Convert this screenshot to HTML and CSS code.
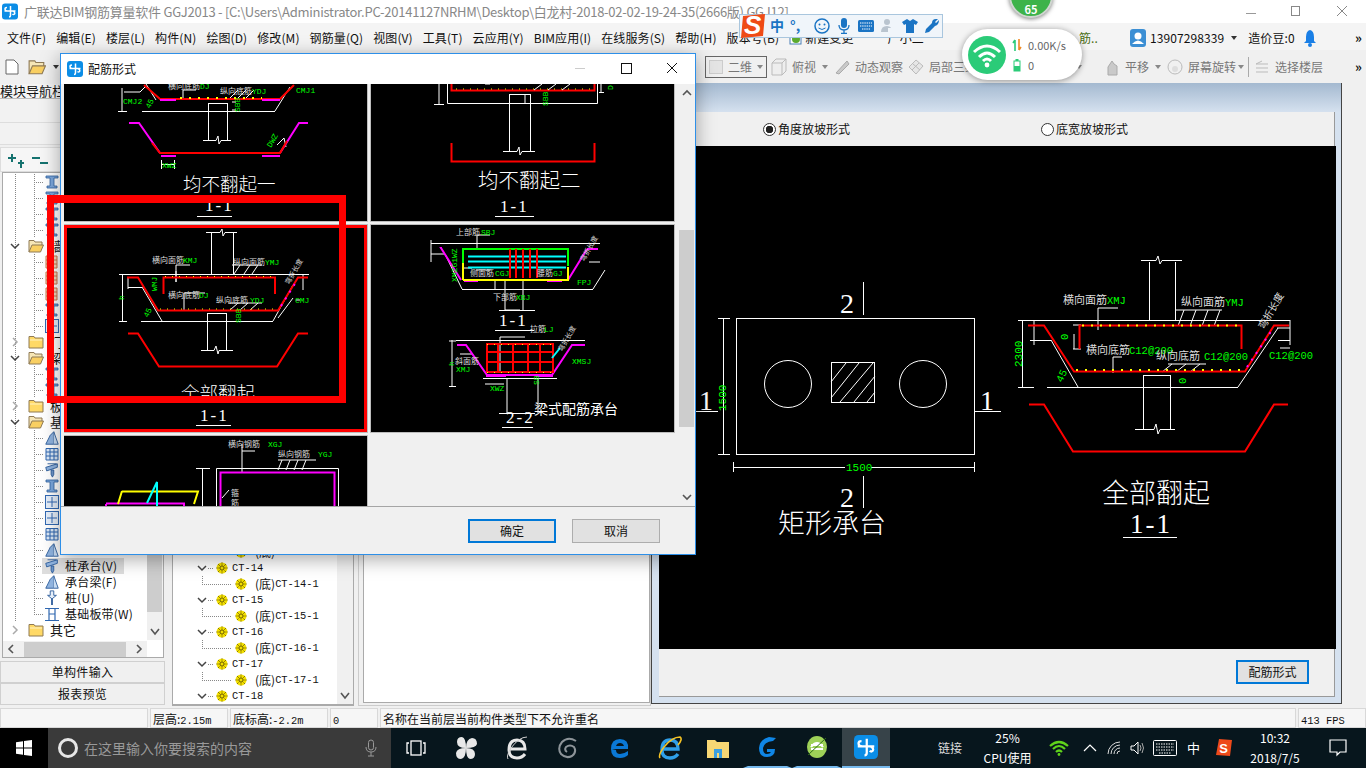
FILE: index.html
```html
<!DOCTYPE html>
<html lang="zh-CN">
<head>
<meta charset="utf-8">
<title>配筋形式</title>
<link rel="stylesheet" href="styles.css">
</head>
<body>
<svg class="defs" aria-hidden="true">
  <symbol id="gld" viewBox="0 0 16 16"><rect width="16" height="16" rx="3" fill="#0b8de6"/><path d="M8.5 2.5 V12 Q8.5 13.5 7 13.5 M2.5 7.5 H13.5 M5.5 7.5 Q3 7.5 3 5.5 Q3 4 5 4 M11 7.5 Q13.5 9 12.5 10.5 Q11.5 11.5 10.5 10.5" fill="none" stroke="#fff" stroke-width="1.5"/></symbol>
  <symbol id="folderc" viewBox="0 0 16 14"><path d="M1 3 V1.5 H6 L7 3 H15 V13 H1 Z" fill="#ffd966" stroke="#8f7a55"/><path d="M2 5 H14" stroke="#fff3c4"/></symbol>
  <symbol id="foldero" viewBox="0 0 16 14"><path d="M1 13 V1.5 H6 L7 3 H14 V6" fill="#f6e6b6" stroke="#8f7a55"/><path d="M1 13 L4 6 H15.5 L12.5 13 Z" fill="#f9cf62" stroke="#8f7a55"/></symbol>
  <symbol id="chevd" viewBox="0 0 12 8"><path d="M2 2 L6 6 L10 2" fill="none" stroke="#444" stroke-width="1.5"/></symbol>
  <symbol id="chevr" viewBox="0 0 8 12"><path d="M2 2 L6 6 L2 10" fill="none" stroke="#aaa" stroke-width="1.5"/></symbol>
  <symbol id="col" viewBox="0 0 16 16"><path d="M2 2 H14 V4 H10 V12 H13 V14 H3 V12 H6 V4 H2 Z" fill="#7ba7dc" stroke="#2f5f9f" stroke-width=".8"/></symbol>
  <symbol id="grid" viewBox="0 0 16 16"><path d="M2 2.5 H14 V14 H2 Z M2 6 H14 M2 10 H14 M6 2.5 V14 M10 2.5 V14" fill="#dce9f8" stroke="#2f67b0" stroke-width="1"/></symbol>
  <symbol id="orange" viewBox="0 0 16 16"><path d="M2 2 H13 V14 H2 Z M2 6 H13 M2 10 H13 M8 2 V14" fill="#f4d5bb" stroke="#c9744a"/></symbol>
  <symbol id="boxcross" viewBox="0 0 16 16"><rect x="1.5" y="1.5" width="13" height="13" fill="#e6effa" stroke="#3269b3"/><path d="M8 3 V13 M3 8 H13" stroke="#3269b3"/></symbol>
  <symbol id="cap" viewBox="0 0 16 18"><path d="M1 6 L14 2 V6 L2 10 Z" fill="#8fb3df" stroke="#2a5a9a"/><path d="M7 9 H10 V14 L8.5 17 L7 14 Z" fill="#6f96c9" stroke="#2a5a9a"/><path d="M3 2 H13" stroke="#2a5a9a"/></symbol>
  <symbol id="beam" viewBox="0 0 16 18"><path d="M1 16 L6 6 L10 2 V16 Z" fill="#8fb3df" stroke="#2a5a9a"/><path d="M10 2 L15 16 H10" fill="#c7dcf3" stroke="#2a5a9a"/></symbol>
  <symbol id="pile" viewBox="0 0 16 18"><path d="M6 1 H10 V6 H13 L8 10 L3 6 H6 Z" fill="#e6effa" stroke="#2a5a9a"/><path d="M8 10 V17" stroke="#2a5a9a" stroke-width="2"/></symbol>
  <symbol id="band" viewBox="0 0 16 16"><path d="M1 2.5 H15 M1 14.5 H15 M5 2.5 V14.5 M11 2.5 V14.5 M5 8 H11" fill="none" stroke="#2f67b0" stroke-width="1.2"/></symbol>
  <symbol id="gear" viewBox="0 0 12 12"><circle cx="6" cy="6" r="5.5" fill="#f3e000"/><path d="M.5 6 H11.5 M6 .5 V11.5 M2 2 L10 10 M10 2 L2 10" stroke="#5c4c00" stroke-width="1" stroke-dasharray="1 1"/><circle cx="6" cy="6" r="2" fill="#f3e000" stroke="#5c4c00" stroke-width=".8"/></symbol>
  <symbol id="gicon" viewBox="0 0 24 24"><path d="M14 2 Q5 4 4 13 Q4 22 12 22 Q20 22 20 14 H12 V17 H16 Q15 19 12 19 Q8 19 8 13 Q9 7 18 6 L21 3 Z" fill="#0f86e6"/></symbol>
</svg>

<div class="app">
  <header class="title">
    <svg class="title-icon"><use href="#gld"/></svg>
    <span class="title-text">广联达BIM钢筋算量软件 GGJ2013 - [C:\Users\Administrator.PC-20141127NRHM\Desktop\白龙村-2018-02-02-19-24-35(2666版) GGJ12]</span>
    <span class="wc wc-min"></span>
    <span class="wc wc-max"></span>
    <svg class="wc-close" viewBox="0 0 12 12"><path d="M1 1 L11 11 M11 1 L1 11" stroke="#888" stroke-width="1"/></svg>
  </header>

  <nav class="menu">
    <span>文件(F)</span><span>编辑(E)</span><span>楼层(L)</span><span>构件(N)</span><span>绘图(D)</span><span>修改(M)</span><span>钢筋量(Q)</span><span>视图(V)</span><span>工具(T)</span><span>云应用(Y)</span><span>BIM应用(I)</span><span>在线服务(S)</span><span>帮助(H)</span><span>版本号(B)</span>
    <span class="menu-x">
      <svg class="sm-ico" viewBox="0 0 14 14"><rect x="1" y="1" width="11" height="12" fill="#fff" stroke="#4a7fb5"/><circle cx="7" cy="8" r="4" fill="#5cab2e"/></svg>新建变更</span>
    <span class="menu-y">广小二</span>
    <span class="menu-z">筋..</span>
    <span class="acct">
      <svg class="acct-ico" viewBox="0 0 16 18"><rect width="16" height="18" rx="3" fill="#3c8fd4"/><circle cx="8" cy="7" r="3.5" fill="#fff"/><path d="M2 15 Q8 8 14 15 Z" fill="#fff"/></svg>
      <span>13907298339</span><i class="caret"></i><span class="beans">造价豆:0</span>
      <svg class="bell" viewBox="0 0 14 18"><path d="M7 1 Q11 2 11 8 V12 L13 14 H1 L3 12 V8 Q3 2 7 1 Z" fill="#1a7fe6"/><circle cx="7" cy="16" r="2" fill="#1a7fe6"/></svg>
    </span>
    <span class="more">»</span>
  </nav>

  <div class="tools">
    <div class="tools-l">
      <svg class="t-ico" viewBox="0 0 14 16"><path d="M1 1 H9 L13 5 V15 H1 Z" fill="#fff" stroke="#666"/></svg>
      <svg class="t-ico2" viewBox="0 0 18 16"><use href="#foldero"/></svg>
      <i class="caret"></i>
    </div>
    <div class="tools-r">
      <span class="combo"><i class="combo-box"></i>二维<i class="caret caret-g"></i></span>
      <svg class="g-ico" viewBox="0 0 16 18"><path d="M1 5 L5 1 H15 V13 L11 17 H1 Z M1 5 H11 V17 M11 5 L15 1" fill="#eee" stroke="#bbb"/></svg>
      <span class="g-t g-a">俯视</span><i class="caret caret-g"></i>
      <svg class="g-ico" viewBox="0 0 16 16"><path d="M2 14 L13 2 L15 5 L5 15 Z" fill="#c9c9c9" stroke="#aaa"/></svg>
      <span class="g-t">动态观察</span>
      <svg class="g-ico g-b" viewBox="0 0 16 16"><path d="M8 1 L15 7 L8 15 L1 8 Z M5 5 L12 11 M11 4 L4 11" fill="#e6e6e6" stroke="#bbb"/></svg>
      <span class="g-t">局部三维</span>
      <span class="g-t g-c">放大</span><i class="caret caret-g"></i>
      <svg class="g-ico g-d" viewBox="0 0 16 18"><path d="M4 17 V9 L8 3 L10 6 L13 8 V17 Z" fill="#c9c9c9" stroke="#aaa"/></svg>
      <span class="g-t">平移</span><i class="caret caret-g"></i>
      <svg class="g-ico g-e" viewBox="0 0 16 18"><circle cx="8" cy="9" r="7" fill="none" stroke="#bbb"/><circle cx="8" cy="11" r="3" fill="#ddd"/></svg>
      <span class="g-t">屏幕旋转</span><i class="caret caret-t"></i><i class="t-sep"></i>
      <svg class="g-ico" viewBox="0 0 16 16"><path d="M2 5 H14 M2 9 H14 M2 13 H14 M8 2 L2 5" stroke="#bbb" fill="none"/></svg>
      <span class="g-t">选择楼层</span>
      <span class="more more-t">»</span>
    </div>
  </div>

  <main class="main">
    <section class="nav">
      <div class="nav-head">模块导航栏</div>
      <div class="nav-tab"></div>
      <div class="nav-tab nav-tab2"></div>
      <div class="nav-tool">
        <svg class="pm" viewBox="0 0 18 16"><path d="M5 1 V9 M1 5 H9 M11 10 H17 M14 7 V15" stroke="#15726f" stroke-width="2" fill="none"/></svg>
        <svg class="pm" viewBox="0 0 18 16"><path d="M1 5 H9 M9 10 H17" stroke="#15726f" stroke-width="2" fill="none"/></svg>
      </div>
      <div class="nav-tree">
        <div class="nav-scroll-area">
          <div class="row l2"><svg class="ic"><use href="#col"/></svg></div>
          <div class="row l2"><svg class="ic"><use href="#col"/></svg></div>
          <div class="row l2"><svg class="ic"><use href="#col"/></svg></div>
          <div class="row l2"><svg class="ic"><use href="#col"/></svg></div>
          <div class="row l0"><svg class="ch"><use href="#chevd"/></svg><svg class="fo"><use href="#foldero"/></svg><span>墙</span></div>
          <div class="row l2"><svg class="ic"><use href="#orange"/></svg></div>
          <div class="row l2"><svg class="ic"><use href="#orange"/></svg></div>
          <div class="row l2"><svg class="ic"><use href="#orange"/></svg></div>
          <div class="row l2"><svg class="ic"><use href="#col"/></svg></div>
          <div class="row l2"><svg class="ic"><use href="#boxcross"/></svg></div>
          <div class="row l0"><svg class="chr"><use href="#chevr"/></svg><svg class="fo"><use href="#folderc"/></svg><span>门</span></div>
          <div class="row l0"><svg class="ch"><use href="#chevd"/></svg><svg class="fo"><use href="#foldero"/></svg><span>梁</span></div>
          <div class="row l2"><svg class="ic"><use href="#col"/></svg></div>
          <div class="row l2"><svg class="ic"><use href="#col"/></svg></div>
          <div class="row l0"><svg class="chr"><use href="#chevr"/></svg><svg class="fo"><use href="#folderc"/></svg><span>板</span></div>
          <div class="row l0"><svg class="ch"><use href="#chevd"/></svg><svg class="fo"><use href="#foldero"/></svg><span>基</span></div>
          <div class="row l2"><svg class="ic"><use href="#beam"/></svg></div>
          <div class="row l2"><svg class="ic"><use href="#grid"/></svg></div>
          <div class="row l2"><svg class="ic"><use href="#cap"/></svg></div>
          <div class="row l2"><svg class="ic"><use href="#col"/></svg></div>
          <div class="row l2"><svg class="ic"><use href="#boxcross"/></svg></div>
          <div class="row l2"><svg class="ic"><use href="#boxcross"/></svg></div>
          <div class="row l2"><svg class="ic"><use href="#grid"/></svg></div>
          <div class="row l2"><svg class="ic"><use href="#beam"/></svg></div>
          <div class="row l2"><span class="hl"><svg class="ic"><use href="#cap"/></svg><span class="n">桩承台(V)</span></span></div>
          <div class="row l2"><svg class="ic"><use href="#beam"/></svg><span class="n">承台梁(F)</span></div>
          <div class="row l2"><svg class="ic"><use href="#pile"/></svg><span class="n">桩(U)</span></div>
          <div class="row l2 l2-end"><svg class="ic"><use href="#band"/></svg><span class="n">基础板带(W)</span></div>
          <div class="row l0 l0-end"><svg class="chr"><use href="#chevr"/></svg><svg class="fo"><use href="#folderc"/></svg><span>其它</span></div>
        </div>
        <div class="vbar"><span class="vbar-thumb"></span><svg class="vbar-a" viewBox="0 0 10 8"><path d="M1 1 L5 6 L9 1" fill="none" stroke="#555" stroke-width="1.6"/></svg></div>
        <div class="hbar"><svg class="hbar-a" viewBox="0 0 8 10"><path d="M6 1 L2 5 L6 9" fill="none" stroke="#555" stroke-width="1.6"/></svg><span class="hbar-thumb"></span><svg class="hbar-a" viewBox="0 0 8 10"><path d="M2 1 L6 5 L2 9" fill="none" stroke="#555" stroke-width="1.6"/></svg></div>
      </div>
      <div class="nav-btn nav-btn1">单构件输入</div>
      <div class="nav-btn">报表预览</div>
    </section>

    <section class="tree2">
      <div class="tree2-list">
        <div class="p"><svg class="ch2"><use href="#chevd"/></svg><svg class="gr"><use href="#gear"/></svg><span class="m">CT-13</span></div>
        <div class="c"><svg class="gr"><use href="#gear"/></svg>(底)<span class="m">CT-13-1</span></div>
        <div class="p"><svg class="ch2"><use href="#chevd"/></svg><svg class="gr"><use href="#gear"/></svg><span class="m">CT-14</span></div>
        <div class="c"><svg class="gr"><use href="#gear"/></svg>(底)<span class="m">CT-14-1</span></div>
        <div class="p"><svg class="ch2"><use href="#chevd"/></svg><svg class="gr"><use href="#gear"/></svg><span class="m">CT-15</span></div>
        <div class="c"><svg class="gr"><use href="#gear"/></svg>(底)<span class="m">CT-15-1</span></div>
        <div class="p"><svg class="ch2"><use href="#chevd"/></svg><svg class="gr"><use href="#gear"/></svg><span class="m">CT-16</span></div>
        <div class="c"><svg class="gr"><use href="#gear"/></svg>(底)<span class="m">CT-16-1</span></div>
        <div class="p"><svg class="ch2"><use href="#chevd"/></svg><svg class="gr"><use href="#gear"/></svg><span class="m">CT-17</span></div>
        <div class="c"><svg class="gr"><use href="#gear"/></svg>(底)<span class="m">CT-17-1</span></div>
        <div class="p"><svg class="ch2"><use href="#chevd"/></svg><svg class="gr"><use href="#gear"/></svg><span class="m">CT-18</span></div>
      </div>
      <div class="tree2-bar"><svg class="vbar-a" viewBox="0 0 10 8"><path d="M1 1 L5 6 L9 1" fill="none" stroke="#555" stroke-width="1.6"/></svg></div>
    </section>

    <section class="blank"><div class="blank-in"></div></section>

    <section class="form">
      <div class="form-top"></div>
      <div class="radios">
        <label class="radio radio1"><i class="dot dot-on"></i>角度放坡形式</label>
        <label class="radio"><i class="dot"></i>底宽放坡形式</label>
      </div>
      <svg class="canvas" viewBox="659 146 677 503">
        <g class="cw">
          <rect x="736.5" y="318.5" width="238" height="136"/>
          <circle cx="788" cy="384" r="23.5"/><circle cx="923" cy="384" r="23.5"/>
          <rect x="831.5" y="362.5" width="43" height="40"/>
          <path d="M831 382 L846 363 M831 398 L859 363 M840 402 L873 363 M854 402 L875 376 M867 402 L875 392"/>
          <path d="M863.5 282 V315 M863.5 476 V508 M696 411.5 H718 M975 411.5 H1001"/>
          <path d="M723.5 318 V454 M718 318.5 H730 M718 454.5 H730 M733 467.5 H975 M733.5 462 V472 M974.5 462 V472"/>
          <path d="M1026 320.5 H1290 M1149.5 262 V320 M1175.5 262 V320 M1141 260.5 H1156 L1158 256 L1160 264 L1162 260.5 H1182"/>
          <path d="M1047 387.5 H1238 M1051 340 L1078 387 M1238 387 L1278 328 M1030 340.5 H1051 M1278 340.5 H1290 M1034 320 V345"/>
          <path d="M1143.5 375 V429 M1170.5 375 V429 M1135 429.5 H1154 L1156 424 L1158 434 L1160 429.5 H1175 M1143 375.5 H1170"/>
          <path d="M1018 320.5 H1034 M1018 387.5 H1034 M1022.5 320 V387 M1074 334 V349 M1073 325 H1081 M1073 349 H1081"/>
          <path d="M1098 308 H1118 M1098 308 V330 M1176 310 H1222 M1184 310 L1178 326 M1196 310 L1190 326 M1208 310 L1202 326 M1220 310 L1214 326"/>
          <path d="M1113 357 H1122 M1113 357 V373 M1168 364 H1206 M1172 364 L1162 372 M1186 364 L1176 372 M1200 364 L1190 372"/>
          <path d="M1280 348 H1290 M1277 328 H1290 M1290 320 V345"/>
        </g>
        <path class="cr" d="M1028 325.5 H1044 L1074 371.5 H1245 L1274 325.5 H1289"/>
        <path class="cr" d="M1079.5 349 V325.5 H1241.5 V349"/>
        <path class="cr" d="M1029 404.5 H1044 L1073 451.5 H1245 L1274 404.5 H1288"/>
        <path class="cy" d="M1082 325.5 H1240 M1076 370 H1244"/>
        <path class="cmd" d="M1247 367 L1272 330"/>
        <text class="t-big" x="778" y="533">矩形承台</text>
        <text class="t-big" x="1102" y="503">全部翻起</text>
        <text class="t-num" x="840" y="313">2</text>
        <text class="t-num" x="840" y="507">2</text>
        <text class="t-num" x="699" y="410">1</text>
        <text class="t-num" x="980" y="410">1</text>
        <text class="t-num2" x="1130" y="533">1-1</text>
        <path class="cw" d="M1123 537.5 H1177"/>
        <text class="t-g11" transform="rotate(-90 726 411)" x="726" y="411">1500</text>
        <rect class="cb" x="845" y="462" width="26" height="11"/>
        <text class="t-g11" x="846" y="471">1500</text>
        <text class="t-g11" transform="rotate(-90 1022 367)" x="1022" y="367">2300</text>
        <text class="t-g10" transform="rotate(-90 1068 340)" x="1068" y="340">0</text>
        <text class="t-g10" transform="rotate(-90 1186 384)" x="1186" y="384">0</text>
        <text class="t-g10" transform="rotate(-65 1062 383)" x="1062" y="383">45</text>
        <text class="t-w11" x="1063" y="304">横向面筋</text><text class="t-g10" x="1107" y="304">XMJ</text>
        <text class="t-w11" x="1181" y="306">纵向面筋</text><text class="t-g10" x="1225" y="306">YMJ</text>
        <text class="t-w11" x="1086" y="354">横向底筋</text><text class="t-g10" x="1129" y="354">C12@200</text>
        <text class="t-w11" x="1156" y="360">纵向底筋</text><text class="t-g10" x="1204" y="360">C12@200</text>
        <text class="t-g10" x="1269" y="359">C12@200</text>
        <text class="t-w10" transform="rotate(-60 1264 330)" x="1264" y="330">弯折长度</text>
      </svg>
      <div class="form-foot"><button class="btn btn-on foot-btn" type="button">配筋形式</button></div>
    </section>
    <aside class="gutter"></aside>
  </main>

  <footer class="status">
    <span class="s s0"></span>
    <span class="s s1">层高:<b>2.15m</b></span>
    <span class="s s2">底标高:<b>-2.2m</b></span>
    <span class="s s3"><b>0</b></span>
    <span class="s s4">名称在当前层当前构件类型下不允许重名</span>
    <span class="s s5"><b>413 FPS</b></span>
  </footer>

  <div class="taskbar">
    <div class="start"><svg class="win" viewBox="0 0 16 16"><path d="M0 2.2 L7 1.2 V7.5 H0 Z M8 1 L16 0 V7.5 H8 Z M0 8.5 H7 V14.8 L0 13.8 Z M8 8.5 H16 V16 L8 15 Z" fill="#fff"/></svg></div>
    <div class="search"><i class="cortana"></i><span>在这里输入你要搜索的内容</span>
      <svg class="mic" viewBox="0 0 12 18"><rect x="3.5" y="1" width="5" height="10" rx="2.5" fill="none" stroke="#999"/><path d="M1 8 Q1 13 6 13 Q11 13 11 8 M6 13 V17 M3 17 H9" fill="none" stroke="#999"/></svg></div>
    <div class="tasks">
      <div class="task"><svg class="ti" viewBox="0 0 20 18"><rect x="5" y="2" width="10" height="14" fill="none" stroke="#fff" stroke-width="1.3"/><path d="M3 4 H1 V14 H3 M17 4 H19 V14 H17" fill="none" stroke="#fff" stroke-width="1.3"/></svg></div>
      <div class="task"><svg class="ti2" viewBox="0 0 24 24"><path d="M12 12 Q3 12 3 6 Q3 1 8 1 Q12 2 12 12 Q21 12 21 18 Q21 23 16 23 Q12 22 12 12 Q12 3 18 2 Q23 2 23 8 Q22 12 12 12 Q3 12 2 17 Q2 23 7 23 Q12 22 12 12 Z" fill="#e8e8e8"/></svg></div>
      <div class="task"><svg class="ti2" viewBox="0 0 24 24"><path d="M4 13 H20 Q20 4 12 4 Q4 4 4 14 Q4 22 12 22 Q17 22 20 18" fill="none" stroke="#e8e8e8" stroke-width="3"/><path d="M3 23 Q1 20 6 12 Q14 1 22 1" fill="none" stroke="#cfcfcf"/></svg></div>
      <div class="task"><svg class="ti2" viewBox="0 0 24 24"><path d="M20 5 Q12 0 6 6 Q1 12 5 18 Q10 23 16 20 Q21 16 18 11 Q14 8 10 11 Q8 14 11 16" fill="none" stroke="#8d9499" stroke-width="2"/></svg></div>
      <div class="task"><svg class="ti2" viewBox="0 0 24 24"><path d="M4 13 H20 Q21 3 12 3 Q3 3 3 13 Q3 22 12 22 Q17 22 20 19 V15 Q16 18 12 18 Q8 18 8 14 M8 10 Q9 7 12 7 Q15 7 16 10 Z" fill="#0a78d6" fill-rule="evenodd"/></svg></div>
      <div class="task"><svg class="ti2" viewBox="0 0 24 24"><path d="M4 13 H20 Q20 4 12 4 Q4 4 4 14 Q4 22 12 22 Q17 22 20 18" fill="none" stroke="#2f9fe8" stroke-width="3.4"/><path d="M2 22 Q0 19 6 11 Q14 1 22 1 Q25 3 20 9" fill="none" stroke="#f6c324" stroke-width="1.6"/></svg></div>
      <div class="task"><svg class="ti2" viewBox="0 0 24 22"><path d="M1 3 H9 L11 5 H23 V21 H1 Z" fill="#f7d774"/><path d="M8 12 H16 V21 H13 V16 H11 V21 H8 Z" fill="#3a9ee0"/></svg></div>
      <div class="task task-on"><svg class="ti3"><use href="#gicon"/></svg></div>
      <div class="task task-on"><svg class="ti2" viewBox="0 0 24 24"><ellipse cx="12" cy="12" rx="10" ry="11" fill="#9ed158"/><path d="M6 10 H18 M6 14 H18 M6 12 Q12 4 18 12" fill="none" stroke="#fff" stroke-width="2"/><path d="M3 20 L21 3" stroke="#2e6e16"/></svg></div>
      <div class="task task-act"><svg class="ti4"><use href="#gld"/></svg></div>
    </div>
    <div class="tray">
      <span class="tr-link">链接</span>
      <span class="tr-two"><span>25%</span><span>CPU使用</span></span>
      <span class="tr"><svg class="tr-w" viewBox="0 0 20 16"><path d="M1 6 Q10 -2 19 6 M4 9 Q10 3 16 9 M7 12 Q10 9 13 12" fill="none" stroke="#5fd31b" stroke-width="2.2"/><circle cx="10" cy="14.5" r="1.4" fill="#5fd31b"/></svg></span>
      <span class="tr"><svg class="tr-s" viewBox="0 0 14 10"><path d="M1 8 L7 2 L13 8" fill="none" stroke="#fff" stroke-width="1.2"/></svg></span>
      <span class="tr"><svg class="tr-s" viewBox="0 0 14 14"><path d="M1 13 A12 12 0 0 1 13 1 M4 13 A9 9 0 0 1 13 4 M7 13 A6 6 0 0 1 13 7 M10 13 A3 3 0 0 1 13 10" fill="none" stroke="#ddd" stroke-width="1"/></svg></span>
      <span class="tr"><svg class="tr-s2" viewBox="0 0 16 16"><path d="M1 6 H4 L8 2 V14 L4 10 H1 Z" fill="none" stroke="#fff"/><path d="M10 5 Q12 8 10 11 M12 3 Q15 8 12 13" fill="none" stroke="#aaa"/></svg></span>
      <span class="tr"><svg class="tr-k" viewBox="0 0 24 16"><rect x=".5" y=".5" width="23" height="15" rx="1" fill="none" stroke="#fff"/><path d="M3 4 H21 M3 7 H21 M3 10 H21 M6 13 H18" stroke="#fff" stroke-dasharray="1.5 1"/></svg></span>
      <span class="tr tr-zh">中</span>
      <span class="tr"><svg class="tr-so" viewBox="0 0 16 18"><path d="M3 0 L16 1 L14 17 L0 16 Z" fill="#ee4a1a"/></svg><span class="tr-so-t">S</span></span>
      <span class="tr-two tr-time"><span>10:32</span><span>2018/7/5</span></span>
      <span class="tr"><svg class="tr-n" viewBox="0 0 18 18"><path d="M1 1 H17 V13 H11 L8 16 V13 H1 Z" fill="none" stroke="#fff" stroke-width="1.2"/></svg></span>
    </div>
  </div>
</div>

<section class="dialog">
  <div class="d-title">
    <svg class="d-icon"><use href="#gld"/></svg>
    <span class="d-name">配筋形式</span>
    <span class="d-min"></span><span class="d-max"></span>
    <svg class="d-close" viewBox="0 0 12 12"><path d="M1 1 L11 11 M11 1 L1 11" stroke="#111" stroke-width="1"/></svg>
  </div>
  <div class="d-body">
    <div class="d-grid">
      <div class="cell c-1">
        <svg class="cell-svg" viewBox="64 84 303 137">
          <g class="cw">
            <path d="M142 111.5 H275 M146 84 L156 100 M275 111 L290 87 M122 88 V111 M118 111.5 H127 M124 92 H140 L146 86 M208.5 103 V140 M227.5 103 V140 M208 103.5 H227 M203 140.5 H216 L218 136 L219 144 L221 140.5 H231 M232 102 H236 M232 110 H236"/>
            <path d="M183 90 V99 M183 90 H196 M230 98 L238 90 M238 98 L246 90 M246 98 L254 90"/>
            <path d="M161 164.5 H175 M161.5 160 V169 M174.5 160 V169 M277 145 L284 138 L286 147"/>
          </g>
          <path class="cr" d="M144 85 L160 99 H280 L294 85"/>
          <path class="cm" d="M160 100 H176 M262 100 H280"/>
          <path class="cm" d="M129 123 H139 L160 153 M280 153 L299 123 H308 M161 156 H176 M262 156 H280"/>
          <path class="cr" d="M152 143 L160 153 H280 L287 141"/>
          <path class="cy" d="M180 98 H262"/>
          <text class="t-w9" x="168" y="89">横向底筋</text><text class="t-g8" x="200" y="89">DJ</text>
          <text class="t-w9" x="220" y="94">纵向底筋</text><text class="t-g8" x="252" y="94">YDJ</text>
          <text class="t-g8" x="296" y="93">CMJ1</text>
          <text class="t-g8" x="123" y="104">CMJ2</text>
          <text class="t-g8" transform="rotate(-65 150 109)" x="150" y="109">45</text>
          <text class="t-g8" transform="rotate(-90 240 112)" x="240" y="112">SBB</text>
          <text class="t-g8" x="162" y="168">XWZ</text>
          <text class="t-g8" transform="rotate(-60 271 148)" x="271" y="148">DWZ</text>
          <text class="t-h" x="183" y="191">均不翻起一</text>
          <text class="t-n" x="205" y="211">1-1</text>
          <path class="cw" d="M197 216.5 H232"/>
        </svg>
      </div>
      <div class="cell c-2">
        <svg class="cell-svg" viewBox="371 84 303 137">
          <g class="cw">
            <path d="M447.5 84 V103.5 H597.5 V84 M439 84 V104 M434 104.5 H444 M509.5 94 V151 M530.5 94 V151 M509 94.5 H530 M503 151.5 H517 L519 147 L520 155 L522 151.5 H535 M525 94 V104 M601 84 V92 M599 92.5 H604 M485 84 H490"/>
          </g>
          <path class="cr" d="M451.5 84 V90.5 H594.5 V84"/>
          <path class="cr" d="M451.5 143 V161.5 H594.5 V143"/>
          <path class="cw" d="M534 90 L542 84 M548 90 L556 84 M562 90 L570 84"/>
          <path class="cy2" d="M456 89 H590"/>
          <text class="t-g8" transform="rotate(-90 548 106)" x="548" y="106">SBB</text>
          <text class="t-g8" transform="rotate(-90 613 90)" x="613" y="90">D</text>
          <text class="t-h2" x="478" y="188">均不翻起二</text>
          <text class="t-n" x="500" y="212">1-1</text>
          <path class="cw" d="M495 216.5 H534"/>
        </svg>
      </div>
      <div class="cell c-3 cell-sel">
        <svg class="cell-svg" viewBox="67 228 297 201">
          <g class="cw">
            <path d="M127 274.5 H309 M211.5 232 V274 M233.5 232 V274 M206 232.5 H220 L222 229 L223 236 L225 232.5 H237"/>
            <path d="M141 321.5 H273 M142 287 L162 321 M273 321 L293 285 M128 287.5 H142 M128 278 V289 M122.5 274 V321 M119 274.5 H127 M119 321.5 H127"/>
            <path d="M207.5 313 V350 M226.5 313 V350 M207 313.5 H226 M201 350.5 H214 L216 346 L218 354 L219 350.5 H233"/>
            <path d="M176 271 V282 M176 265 H190 M176 265 V282 M240 265 L234 274 M250 265 L244 274 M258 265 L252 274 M232 265 H262 M184 293 H205 M184 293 V311 M230 310 L238 303 M240 310 L248 303 M250 310 L258 303 M228 303 H262 M300 300 H296 M278 318 L293 298 M303 274 V290"/>
          </g>
          <path class="cr" d="M127 277.5 H138 L158 310.5 H278 L298 277.5 H308"/>
          <path class="cr" d="M163.5 294 V277.5 H275 V294"/>
          <path class="cr" d="M128 333.5 H138 L159 366.5 H277 L298 333.5 H308"/>
          <path class="cy2" d="M165 276.5 H272 M160 309 H276"/>
          <path class="cmd" d="M281 306 L296 282"/>
          <text class="t-w9" x="152" y="263">横向面筋</text><text class="t-g8" x="183" y="263">KMJ</text>
          <text class="t-w9" x="233" y="265">纵向面筋</text><text class="t-g8" x="265" y="265">YMJ</text>
          <text class="t-w9" x="168" y="298">横向底筋</text><text class="t-g8" x="199" y="298">DJ</text>
          <text class="t-w9" x="216" y="303">纵向底筋</text><text class="t-g8" x="250" y="303">YDJ</text>
          <text class="t-g8" x="295" y="303">CMJ</text>
          <text class="t-g8" transform="rotate(-90 157 291)" x="157" y="291">WMJ</text>
          <text class="t-g8" transform="rotate(-90 124 300)" x="124" y="300">h</text>
          <text class="t-g8" transform="rotate(-65 148 318)" x="148" y="318">45</text>
          <text class="t-g8" transform="rotate(-90 241 323)" x="241" y="323">SBB</text>
          <text class="t-w8" transform="rotate(-60 289 285)" x="289" y="285">弯折长度</text>
          <text class="t-h" x="181" y="400">全部翻起</text>
          <text class="t-n" x="200" y="421">1-1</text>
          <path class="cw" d="M196 425.5 H231"/>
        </svg>
      </div>
      <div class="cell c-4">
        <svg class="cell-svg" viewBox="371 225 303 207">
          <g class="cw">
            <path d="M431 243.5 H600 M431 240 V262 M431 254 H445 M589 262 H600 M462 289.5 H593 M445 254 L462 289 M593 289 L605 270 M476 270 H490 M476 230 H476 M477 235 V248 M477 235 H490 M495 281 V289 M505 281 V310 M505 310 H520 M523 281 V310 M499 310.5 H535 M463 268 H472"/>
            <path d="M456 340.5 H585 M452 340 V386 M449 386.5 H456 M449 341 H456 M500 337 H525 M500 337 V372 M507 378 V413 M538 378 V413 M499 413.5 H535 M483 378.5 H557 M460 354 H472 M485 384 H504"/>
          </g>
          <path class="cm" d="M442 248 H441 L461 280 M587 249 L568 280 M587 249 H598"/>
          <path class="cm" d="M464 281 H478 M547 281 H562"/>
          <path class="cgr" d="M463 280 V249 H568 V266"/>
          <path class="cye" d="M463 280 H568 V267 M463 263 V280"/>
          <path class="ccy" d="M468 256.5 H566 M468 261.5 H566 M468 267.5 H566"/>
          <path class="cr" d="M510 249 V278 M516 249 V278 M523 249 V278 M530 249 V278 M537 249 V278"/>
          <path class="cm" d="M457 345 H466 L487 375 H552 L572 345 H585"/>
          <path class="cr" d="M487 344 H553 V372 H487 Z M487 352 H553 M487 362 H553 M498 344 V372 M513 344 V372 M528 344 V372 M540 344 V372"/>
          <path class="cy2" d="M487 372.5 H553"/>
          <path class="cy2" d="M487 344.5 H553"/>
          <path class="cm" d="M486 376 H506 M536 376 H553"/>
          <path class="ccy" d="M552 358 L560 348"/>
          <text class="t-w9" x="456" y="235">上部筋</text><text class="t-g8" x="481" y="235">SBJ</text>
          <text class="t-w9" x="470" y="276">侧面筋</text><text class="t-g8" x="495" y="276">CGJ</text>
          <text class="t-w9" x="537" y="276">腰筋</text><text class="t-g8" x="553" y="276">GJ</text>
          <text class="t-w9" x="493" y="300">下部筋</text><text class="t-g8" x="516" y="300">XBJ</text>
          <text class="t-g8" x="577" y="285">FPJ</text>
          <text class="t-g8" transform="rotate(-90 457 282)" x="457" y="282">XMZG1WZ</text>
          <text class="t-w8" transform="rotate(-60 584 262)" x="584" y="262">弯折长度</text>
          <text class="t-n" x="499" y="326">1-1</text>
          <path class="cw" d="M495 330.5 H534"/>
          <text class="t-w9" x="530" y="332">拉筋</text><text class="t-g8" x="544" y="332">LJ</text>
          <text class="t-w9" x="455" y="364">斜面筋</text>
          <text class="t-g8" x="456" y="372">XMJ</text>
          <text class="t-g8" x="572" y="364">XMSJ</text>
          <text class="t-g8" x="490" y="391">XWZ</text>
          <text class="t-g8" transform="rotate(-90 539 385)" x="539" y="385">SB</text>
          <text class="t-g8" transform="rotate(-90 454 366)" x="454" y="366">h</text>
          <text class="t-w8" transform="rotate(-60 562 352)" x="562" y="352">弯折长度</text>
          <text class="t-n" x="506" y="423">2-2</text>
          <path class="cw" d="M502 427.5 H533"/>
          <text class="t-lbl" x="534" y="414">梁式配筋承台</text>
        </svg>
      </div>
      <div class="cell c-5">
        <svg class="cell-svg" viewBox="64 436 303 70">
          <g class="cw">
            <path d="M216.5 506 V468.5 H338.5 V506 M202.5 468 V506 M196 468.5 H210 M242 444 V472 M242 451 H255 M278 470 L282 460 M286 470 L290 460 M294 470 L298 460 M302 470 L306 460 M278 460 H316 M222 498 L229 490"/>
          </g>
          <path class="cm" d="M220.5 506 V472.5 H334.5 V506 M106 503.5 H184 V506 M106 504 V506"/>
          <path class="cye" d="M122 491.5 H198 L194 504 M122 491 L118 504"/>
          <path class="ccy" d="M147 503 L157 482 V506"/>
          <text class="t-w9" x="228" y="447">横向钢筋</text><text class="t-g8" x="268" y="447">XGJ</text>
          <text class="t-w9" x="278" y="457">纵向钢筋</text><text class="t-g8" x="318" y="457">YGJ</text>
          <text class="t-w9" x="231" y="496">箍</text>
          <text class="t-w9" x="231" y="506">筋</text>
        </svg>
      </div>
    </div>
    <div class="d-bar">
      <svg class="d-a" viewBox="0 0 10 8"><path d="M1 6 L5 2 L9 6" fill="none" stroke="#555" stroke-width="1.6"/></svg>
      <span class="d-thumb"></span>
      <svg class="d-a" viewBox="0 0 10 8"><path d="M1 2 L5 6 L9 2" fill="none" stroke="#555" stroke-width="1.6"/></svg>
    </div>
  </div>
  <div class="d-foot">
    <button class="btn btn-on" type="button">确定</button>
    <button class="btn" type="button">取消</button>
  </div>
</section>

<div class="annot"></div>

<div class="sogou">
  <svg class="sg-logo" viewBox="0 0 26 26"><path d="M3 3 L25 1 L23 23 L1 25 Z" fill="#ef4b16"/></svg>
  <span class="sg-s">S</span>
  <span class="sg-zh">中</span>
  <span class="sg-p">°,</span>
  <svg class="sg-i" viewBox="0 0 16 16"><circle cx="8" cy="8" r="7" fill="none" stroke="#1a74c4" stroke-width="1.5"/><circle cx="5.5" cy="6.5" r="1" fill="#1a74c4"/><circle cx="10.5" cy="6.5" r="1" fill="#1a74c4"/><path d="M4.5 10 Q8 13 11.5 10" fill="none" stroke="#1a74c4"/></svg>
  <svg class="sg-i" viewBox="0 0 16 16"><rect x="5" y="0" width="6" height="10" rx="3" fill="#1a74c4"/><path d="M3 7 Q3 12 8 12 Q13 12 13 7 M8 12 V15 M5 15.5 H11" fill="none" stroke="#1a74c4" stroke-width="1.3"/></svg>
  <svg class="sg-i" viewBox="0 0 16 16"><rect y="2" width="16" height="12" rx="1.5" fill="#1a74c4"/><path d="M2 5 H14 M2 8 H14 M4 11 H12" stroke="#fff" stroke-dasharray="1.4 .8"/></svg>
  <svg class="sg-i" viewBox="0 0 16 16"><circle cx="7" cy="4" r="3" fill="#b9c4cf"/><path d="M1 14 Q1 8 7 8 Q12 8 12 14 Z" fill="#b9c4cf"/><rect x="8" y="10" width="8" height="6" fill="#f0f5fa"/></svg>
  <svg class="sg-i" viewBox="0 0 16 16"><path d="M5 1 L8 3 L11 1 L16 4 L14 7 L12 6 V15 H4 V6 L2 7 L0 4 Z" fill="#1a74c4"/></svg>
  <svg class="sg-i" viewBox="0 0 16 16"><path d="M1 15 L2 11 L8 5 Q8 1 12 1 L14 1 L11 4 L12 5 L15 2 Q15 7 11 8 L5 14 Z" fill="#1a74c4"/></svg>
</div>

<div class="ball"><span>65</span></div>

<div class="net">
  <svg class="net-c" viewBox="0 0 38 38"><circle cx="19" cy="19" r="19" fill="#2bcb78"/><path d="M6 16 Q19 4 32 16 M11 21 Q19 13 27 21 M15 25 Q19 21 23 25" fill="none" stroke="#fff" stroke-width="3"/><circle cx="19" cy="29" r="2.4" fill="#fff"/></svg>
  <div class="net-t">
    <div class="net-r"><svg class="net-i" viewBox="0 0 10 14"><path d="M3 13 V2 M3 2 L1 5" stroke="#2bcb78" stroke-width="1.6" fill="none"/><path d="M7 1 V12 M7 12 L9 9" stroke="#f08a24" stroke-width="1.6" fill="none"/></svg>0.00K/s</div>
    <div class="net-r"><svg class="net-i" viewBox="0 0 10 14"><rect x="2" y="3" width="6" height="10" fill="#fff" stroke="#2bcb78"/><rect x="2" y="8" width="6" height="5" fill="#2bcb78"/><rect x="3.5" y="1" width="3" height="2" fill="#2bcb78"/></svg>0</div>
  </div>
</div>
</body>
</html>
```
FILE: styles.css
```css
* { box-sizing: border-box; }
html, body { margin: 0; padding: 0; }
body {
  position: relative;
  width: 1366px;
  height: 768px;
  overflow: hidden;
  font: 12px/16px "Noto Sans CJK SC", "Liberation Sans", sans-serif;
  color: #111;
  background: #f0f0f0;
}
.defs { position: absolute; width: 0; height: 0; }
.app { display: flex; flex-direction: column; width: 1366px; height: 768px; }

/* title bar */
.title { display: flex; align-items: center; height: 23px; background: #fff; padding-left: 2px; position: relative; flex: none; }
.title-icon { width: 16px; height: 17px; flex: none; }
.title-text { margin-left: 6px; font-size: 13px; color: #888; white-space: nowrap; letter-spacing: -.02em; }
.wc { position: absolute; top: 0; }
.wc-min { left: 1246px; top: 13px; width: 10px; height: 1px; background: #999; }
.wc-max { left: 1291px; top: 6px; width: 9px; height: 10px; border: 1px solid #888; }
.wc-close { position: absolute; left: 1336px; top: 5px; width: 12px; height: 12px; }

/* menu */
.menu { display: flex; align-items: center; gap: 10px; height: 27px; padding: 3px 0 0 7px; background: #f4f4f4; flex: none; position: relative; white-space: nowrap; letter-spacing: .1px; }
.menu-x { margin-left: 0; display: flex; align-items: center; gap: 2px; }
.sm-ico { width: 14px; height: 14px; }
.menu-y { margin-left: 24px; }
.menu-z { margin-left: 145px; color: #4c6e16; }
.acct { display: flex; align-items: center; margin-left: 22px; gap: 0; }
.acct-ico { width: 16px; height: 18px; margin-right: 4px; }
.beans { margin-left: 11px; }
.bell { width: 14px; height: 18px; margin-left: 8px; }
.caret { display: inline-block; width: 0; height: 0; border: 3px solid transparent; border-top: 4px solid #333; border-bottom: 0; margin-left: 7px; }
.caret-g { border-top-color: #888; margin: 0 6px 0 6px; flex: none; }
.caret-t { border-top-color: #888; margin: 0 2px; flex: none; }
.more { margin-left: auto; margin-right: 4px; font-size: 13px; font-weight: bold; }

/* toolbars */
.tools { display: flex; justify-content: space-between; align-items: center; height: 30px; background: #f0f0f0; padding: 4px 0 0 5px; flex: none; color: #777; white-space: nowrap; }
.tools-l { display: flex; align-items: center; }
.t-ico { width: 14px; height: 16px; margin-right: 9px; }
.t-ico2 { width: 18px; height: 16px; }
.tools-r { display: flex; align-items: center; width: 661px; }
.combo { display: flex; align-items: center; justify-content: space-between; width: 62px; height: 22px; border: 1px solid #666; padding-left: 3px; margin-right: 4px; flex: none; }
.combo .caret-g { margin: 0 3px 0 0; }
.combo-box { width: 14px; height: 14px; background: #e4e4e4; border: 1px solid #ccc; }
.g-ico { width: 16px; height: 18px; flex: none; margin-right: 5px; }
.g-b { margin-left: 5px; }
.g-d { margin-left: 16px; }
.g-e { margin-left: 0; }
.g-t { color: #777; flex: none; }
.g-c { margin-left: 69px; }
.t-sep { width: 1px; height: 20px; background: #aaa; margin: 0 5px 0 2px; flex: none; }
.more-t { color: #111; margin-right: 4px; }

/* main */
.main { display: flex; height: 628px; flex: none; background: #f0f0f0; }

.nav { width: 165px; padding: 4px 0 0; display: flex; flex-direction: column; flex: none; }
.nav-head { height: 14px; line-height: 14px; font-size: 13px; white-space: nowrap; background: #f4f4f4; }
.nav-tab { height: 25px; background: #f2f2f2; border-top: 1px solid #bbb; border-bottom: 1px solid #ddd; }
.nav-tab2 { height: 22px; border-top: 0; }
.nav-tool { height: 25px; margin-top: 2px; padding: 5px 0 0 6px; background: #f6f6f6; border: 1px solid #ddd; display: flex; gap: 6px; }
.pm { width: 18px; height: 16px; }
.nav-tree { position: relative; height: 486px; margin-left: 2px; margin-right: 1px; background: #fff; border: 1px solid #aaa; padding-top: 1px; overflow: hidden; }
.nav-scroll-area { height: 467px; overflow: hidden; width: 145px; }
.row { display: flex; align-items: center; height: 16px; white-space: nowrap; background-repeat: no-repeat; }
.l0 { padding-left: 6px; background-image: repeating-linear-gradient(to bottom, #888 0 1px, transparent 1px 2px); background-size: 1px 16px; background-position: 12px 0; }
.l0 > span { margin-left: 6px; font-size: 13px; }
.l2 { padding-left: 41px; position: relative; background-image: repeating-linear-gradient(to bottom, #888 0 1px, transparent 1px 2px), repeating-linear-gradient(to bottom, #888 0 1px, transparent 1px 2px), repeating-linear-gradient(to right, #888 0 1px, transparent 1px 2px); background-size: 1px 16px, 1px 16px, 10px 1px; background-position: 12px 0, 31px 0, 31px 8px; }
.l2-end { background-size: 1px 16px, 1px 8px, 10px 1px; }
.l0-end { background-size: 0 0; }
.ch { width: 12px; height: 8px; flex: none; }
.chr { width: 8px; height: 12px; margin: 0 2px; flex: none; }
.fo { width: 16px; height: 14px; margin-left: 7px; flex: none; }
.ic { width: 16px; height: 16px; flex: none; }
.n { margin-left: 5px; letter-spacing: .2px; }
.hl { display: flex; align-items: center; background: #ddd; height: 16px; margin-left: -2px; padding: 0 7px 0 2px; }
.vbar { position: absolute; right: 0; top: 0; width: 16px; height: 467px; background: #f0f0f0; }
.vbar-thumb { position: absolute; left: 0; right: 1px; top: 260px; bottom: 28px; background: #cdcdcd; }
.vbar-a { position: absolute; left: 3px; bottom: 4px; width: 10px; height: 8px; }
.hbar { position: absolute; left: 0; right: 16px; bottom: 0; height: 16px; background: #f0f0f0; display: flex; align-items: center; justify-content: space-between; padding: 0 4px; }
.hbar-a { width: 8px; height: 10px; flex: none; }
.hbar-thumb { width: 102px; height: 15px; background: #cdcdcd; }
.nav-btn { height: 22px; line-height: 20px; text-align: center; background: #f0f0f0; border: 1px solid #d0d0d0; letter-spacing: .3px; }
.nav-btn1 { margin-top: 3px; }

.tree2 { display: flex; width: 182px; margin-left: 7px; margin-bottom: 2px; background: #fff; border: 1px solid #aaa; border-bottom-width: 2px; padding-top: 447px; flex: none; overflow: hidden; }
.tree2-list { flex: 1; }
.p, .c { display: flex; align-items: center; height: 16px; white-space: nowrap; }
.p { padding-left: 23px; background: repeating-linear-gradient(to right, #888 0 1px, transparent 1px 2px) no-repeat 35px 8px / 6px 1px; }
.c { padding-left: 62px; background: repeating-linear-gradient(to bottom, #888 0 1px, transparent 1px 2px) no-repeat 29px 0 / 1px 8px, repeating-linear-gradient(to right, #888 0 1px, transparent 1px 2px) no-repeat 29px 8px / 30px 1px; }
.ch2 { width: 12px; height: 8px; flex: none; margin-right: 8px; }
.gr { width: 12px; height: 12px; margin-right: 4px; flex: none; }
.c .gr { margin-right: 8px; }
.m { font-family: "Liberation Mono", monospace; font-size: 10.4px; }
.tree2-bar { position: relative; width: 16px; background: #f0f0f0; flex: none; }

.blank { width: 293px; margin-left: 4px; margin-bottom: 2px; padding: 0 0 2px 4px; border: 1px solid #ccc; border-top: 0; flex: none; }
.blank-in { height: 100%; background: #fff; border: 1px solid #aaa; }

.form { display: flex; flex-direction: column; width: 691px; margin-top: 3px; margin-bottom: 4px; padding: 0 6px 4px 7px; border-left: 1px solid #444; border-right: 1px solid #444; border-bottom: 1px solid #444; background: #d5e1ef; flex: none; }
.form-top { height: 29px; margin: 0 -6px 0 -7px; background: linear-gradient(#a4b9d0, #d5e1ef); flex: none; }
.radios { display: flex; align-items: center; height: 34px; background: #f0f0f0; flex: none; border-right: 1px solid #999; padding-left: 104px; }
.radio { display: flex; align-items: center; width: 278px; }
.dot { width: 13px; height: 13px; border-radius: 50%; border: 1px solid #333; background: #fff; margin-right: 2px; display: block; }
.dot-on { background: radial-gradient(circle, #222 0 3.5px, #fff 4px); }
.canvas { display: block; width: 677px; height: 503px; background: #000; flex: none; }
.form-foot { height: 48px; background: #f0f0f0; border-right: 1px solid #999; border-bottom: 1px solid #999; display: flex; justify-content: flex-end; align-items: flex-start; padding: 11px 25px 0 0; flex: none; }
.gutter { flex: 1; background: #f0f0f0; }

.btn { width: 88px; height: 24px; padding: 0; border: 1px solid #adadad; background: #e1e1e1; font: inherit; color: #111; }
.btn-on { border: 2px solid #0078d7; }
.foot-btn { width: 73px; }

/* status bar */
.status { display: flex; height: 20px; gap: 2px; flex: none; background: #f0f0f0; margin-top: 0; }
.s { display: block; padding-left: 2px; line-height: 19px; border: 1px solid #d8d8d8; background: #f6f6f6; white-space: nowrap; flex: none; }
.s b { font: 10.4px "Liberation Mono", monospace; }
.s0 { width: 148px; }
.s1 { width: 78px; }
.s2 { width: 98px; }
.s3 { width: 48px; }
.s4 { width: 916px; }
.s5 { flex: 1; }

/* taskbar */
.taskbar { display: flex; height: 40px; background: #07161d; color: #fff; flex: none; }
.start { width: 48px; background: #000; display: flex; align-items: center; justify-content: center; flex: none; }
.win { width: 16px; height: 16px; }
.search { width: 343px; display: flex; align-items: center; background: #3a3a3a; color: #999; padding-left: 10px; flex: none; font-size: 14px; position: relative; }
.cortana { width: 20px; height: 20px; border: 3px solid #e6e6e6; border-radius: 50%; margin-right: 6px; flex: none; }
.mic { position: absolute; left: 317px; top: 10px; width: 12px; height: 20px; }
.tasks { display: grid; grid-template-columns: 49.5px 51.5px 50.5px 51.5px 51.5px 48.5px 48.5px 49.5px 50px 48px; width: 499px; flex: none; }
.task { display: flex; align-items: center; justify-content: center; position: relative; }
.task-on { border-bottom: 2px solid #76b9ed; border-left: 5px solid #07161d; border-right: 5px solid #07161d; }
.task-act { background: #374349; border-bottom: 2px solid #76b9ed; }
.ti { width: 20px; height: 18px; }
.ti2 { width: 24px; height: 24px; }
.ti3 { width: 24px; height: 24px; }
.ti4 { width: 24px; height: 24px; }
.tray { display: grid; grid-template-columns: 50px 65px 37px 25px 24px 24px 30px 27px 33px 70px 56px; align-items: center; margin-left: auto; width: 441px; height: 40px; }
.tr { display: flex; align-items: center; justify-content: center; position: relative; }
.tr-link { text-align: center; color: #ddd; }
.tr-two { display: flex; flex-direction: column; align-items: center; line-height: 20px; }
.tr-w { width: 20px; height: 16px; }
.tr-s { width: 14px; height: 14px; }
.tr-s2 { width: 16px; height: 16px; }
.tr-k { width: 24px; height: 16px; }
.tr-zh { font-size: 13px; }
.tr-so { width: 16px; height: 18px; }
.tr-so-t { position: absolute; font: bold 13px "Liberation Sans", sans-serif; color: #fff; }
.tr-n { width: 18px; height: 18px; }

/* dialog: a window floating over the application */
.dialog { position: absolute; left: 60px; top: 53px; width: 636px; height: 502px; display: flex; flex-direction: column; border: 1px solid #2d8fe8; background: #f0f0f0; box-shadow: 0 4px 18px rgba(0,0,0,.35); }
.d-title { display: flex; align-items: center; height: 30px; background: #fff; padding-left: 6px; flex: none; position: relative; }
.d-icon { width: 16px; height: 16px; flex: none; }
.d-name { margin-left: 5px; }
.d-min { position: absolute; left: 514px; top: 14px; width: 10px; height: 1px; background: #ccc; }
.d-max { position: absolute; left: 560px; top: 9px; width: 11px; height: 11px; border: 1px solid #111; }
.d-close { position: absolute; left: 605px; top: 8px; width: 12px; height: 12px; }
.d-body { display: flex; flex: 1; min-height: 0; height: 422px; padding-left: 3px; }
.d-grid { display: grid; grid-template-columns: 303px 303px; grid-template-rows: 137px 207px 70px; column-gap: 4px; row-gap: 4px; width: 614px; height: 422px; overflow: hidden; }
.cell { background: #000; overflow: hidden; box-shadow: 0 0 0 1px #bdbdbd; }
.cell-sel { border: 3px solid #f00; }
.cell-svg { display: block; width: 100%; height: 100%; }
.d-bar { position: relative; width: 15px; margin-left: 1px; background: #f0f0f0; display: flex; flex-direction: column; align-items: center; }
.d-a { position: absolute; width: 10px; height: 8px; top: 5px; }
.d-a:last-child { top: auto; bottom: 5px; }
.d-thumb { position: absolute; top: 146px; left: 0; right: 0; height: 197px; background: #cdcdcd; }
.d-foot { display: flex; justify-content: flex-end; gap: 16px; align-items: flex-start; height: 48px; padding: 12px 35px 0 0; border-top: 1px solid #a5a5a5; flex: none; }

/* CAD drawing */
.cw { fill: none; stroke: #fff; stroke-width: 1; }
.cr { fill: none; stroke: #f00; stroke-width: 2; }
.cm { fill: none; stroke: #f0f; stroke-width: 2; }
.cmd { fill: none; stroke: #f0f; stroke-width: 2; stroke-dasharray: 2 6; }
.cy { fill: none; stroke: #ff0; stroke-width: 2; stroke-dasharray: 2 7; }
.cy2 { fill: none; stroke: #ff0; stroke-width: 1; stroke-dasharray: 1 6; }
.cgr { fill: none; stroke: #0f0; stroke-width: 2; }
.cye { fill: none; stroke: #ff0; stroke-width: 2; }
.ccy { fill: none; stroke: #0ff; stroke-width: 2; }
.cb { fill: #000; }
.canvas text, .cell-svg text { font-family: "Noto Sans CJK SC", "Liberation Sans", sans-serif; }
.canvas .t-big { font-size: 27px; fill: #fff; font-weight: 200; }
.canvas .t-num { font: 300 28px "Liberation Serif", serif; fill: #fff; }
.canvas .t-num2 { font: 27px "Liberation Serif", serif; fill: #fff; letter-spacing: 2px; }
.canvas .t-g11 { font: 11px "Liberation Mono", monospace; fill: #0f0; }
.canvas .t-g10, .cell-svg .t-g8 { fill: #0f0; font-family: "Liberation Mono", monospace; }
.canvas .t-g10 { font-size: 10.5px; }
.cell-svg .t-g8 { font-size: 8px; }
.canvas .t-w11 { font-size: 11px; fill: #ddd; }
.canvas .t-w10 { font-size: 10px; fill: #ddd; }
.cell-svg .t-w9 { font-size: 8px; fill: #ddd; }
.cell-svg .t-w8 { font-size: 7px; fill: #ddd; }
.cell-svg .t-h { font-size: 18.5px; fill: #fff; font-weight: 200; }
.cell-svg .t-h2 { font-size: 20.5px; fill: #fff; font-weight: 200; }
.cell-svg .t-n { font: 17px "Liberation Serif", serif; fill: #fff; letter-spacing: 2px; }
.cell-svg .t-lbl { font-size: 14px; fill: #fff; }

/* annotation drawn over the screenshot */
.annot { position: absolute; left: 47px; top: 195px; width: 299px; height: 208px; border: 7px solid #f00; border-top-width: 8px; }

/* floating widgets */
.sogou { position: absolute; left: 739px; top: 14px; width: 204px; height: 24px; background: #f0f5fa; border: 1px solid #a9c6de; display: flex; align-items: center; }
.sg-logo { position: absolute; left: 0; top: -2px; width: 26px; height: 26px; }
.sg-s { position: absolute; left: 4px; top: -4px; font: italic bold 26px/28px "Liberation Sans", sans-serif; color: #fff; }
.sg-zh { position: absolute; left: 30px; top: 2px; font-size: 14px; font-weight: bold; color: #1a74c4; }
.sg-p { position: absolute; left: 50px; top: 2px; font-size: 14px; font-weight: bold; color: #1a74c4; }
.sg-i { width: 16px; height: 16px; position: relative; flex: none; margin-right: 6px; }
.sg-i:nth-of-type(2) { margin-left: 74px; }
.ball { position: absolute; left: 1009px; top: -26px; width: 44px; height: 44px; border-radius: 50%; background: #3db34a; border: 2px solid #cfd6d0; box-shadow: 0 1px 4px rgba(0,0,0,.5); color: #fff; text-align: center; padding-top: 26px; font-size: 11px; line-height: 14px; font-weight: bold; }
.net { position: absolute; left: 962px; top: 29px; width: 120px; height: 51px; border-radius: 26px; background: #fff; box-shadow: 0 1px 6px rgba(0,0,0,.4); display: flex; align-items: center; padding-left: 6px; gap: 6px; }
.net-c { width: 38px; height: 38px; flex: none; }
.net-t { display: flex; flex-direction: column; gap: 4px; color: #666; font-size: 11px; }
.net-r { display: flex; align-items: center; gap: 6px; line-height: 16px; }
.net-i { width: 10px; height: 14px; flex: none; }
```
